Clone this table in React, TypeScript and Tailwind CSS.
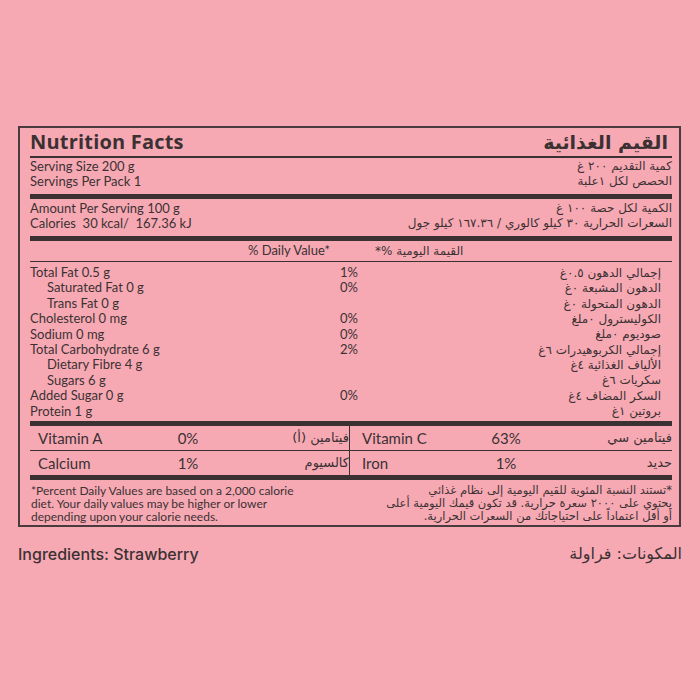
const en = "font-['Lato','Liberation_Sans',sans-serif]"
const ar = "font-['DejaVu_Sans','Noto_Sans',sans-serif]"

type Row = { en: string; pct: string; ar: string; sub?: boolean }

const rows: Row[] = [
  { en: "Total Fat 0.5 g", pct: "1%", ar: "إجمالي الدهون ٠.٥غ" },
  { en: "Saturated Fat 0 g", pct: "0%", ar: "الدهون المشبعة ٠غ", sub: true },
  { en: "Trans Fat 0 g", pct: "", ar: "الدهون المتحولة ٠غ", sub: true },
  { en: "Cholesterol 0 mg", pct: "0%", ar: "الكوليسترول ٠ملغ" },
  { en: "Sodium 0 mg", pct: "0%", ar: "صوديوم ٠ملغ" },
  { en: "Total Carbohydrate 6 g", pct: "2%", ar: "إجمالي الكربوهيدرات ٦غ" },
  { en: "Dietary Fibre 4 g", pct: "", ar: "الألياف الغذائية ٤غ", sub: true },
  { en: "Sugars 6 g", pct: "", ar: "سكريات ٦غ", sub: true },
  { en: "Added Sugar 0 g", pct: "0%", ar: "السكر المضاف ٤غ" },
  { en: "Protein 1 g", pct: "", ar: "بروتين ١غ" },
]

function ThickBar() {
  return <div className="h-[5px] bg-[#3b3133]" />
}

function ThinLine() {
  return <div className="h-[1.5px] bg-[#3b3133]" />
}

function VitCell({ en: label, pct, ar: arLabel, right }: { en: string; pct: string; ar: string; right?: boolean }) {
  return (
    <div
      className={
        right
          ? "grid grid-cols-[126px_60px_1fr] items-center h-full"
          : "grid grid-cols-[128px_60px_1fr] items-center h-full border-r-[1.5px] border-[#3b3133]"
      }
    >
      <span className={right ? "pl-[12px]" : "pl-[8px]"}>{label}</span>
      <span className="text-center">{pct}</span>
      <span dir="rtl" className={`${ar} text-[13px] ${right ? "pl-0" : "pl-[10px]"}`}>
        {arLabel}
      </span>
    </div>
  )
}

export default function App() {
  return (
    <div className={`w-[700px] h-[700px] bg-[#f7a9b3] pt-[126px] pl-[18px] text-[#3b3133] ${en}`}>
      <div className="w-[663px] border-2 border-[#4a3b3e] pl-[10px] pr-[7px]">
        {/* title */}
        <div className="flex items-center justify-between h-[28px]">
          <span className="font-['Open_Sans',sans-serif] text-[20px] font-bold tracking-[0.2px]">Nutrition Facts</span>
          <span dir="rtl" className={`${ar} text-[19px] font-bold pr-[4px]`}>
            القيم الغذائية
          </span>
        </div>
        <ThinLine />

        {/* serving */}
        <div className="flex justify-between text-[13px] leading-[15.5px] pt-[1px] pb-[4px]">
          <div>
            <div>Serving Size 200 g</div>
            <div>Servings Per Pack 1</div>
          </div>
          <div dir="rtl" className={`${ar} text-[12px]`}>
            <div>كمية التقديم ٢٠٠ غ</div>
            <div>الحصص لكل ١علبة</div>
          </div>
        </div>
        <ThickBar />

        <div className="flex justify-between text-[13px] leading-[15.5px] pt-[2px] pb-[4px]">
          <div>
            <div>Amount Per Serving 100 g</div>
            <div>Calories&nbsp;&nbsp;30 kcal/&nbsp;&nbsp;167.36 kJ</div>
          </div>
          <div dir="rtl" className={`${ar} text-[12px]`}>
            <div>الكمية لكل حصة ١٠٠ غ</div>
            <div>السعرات الحرارية ٣٠ كيلو كالوري / ١٦٧.٣٦ كيلو جول</div>
          </div>
        </div>
        <ThickBar />

        {/* daily value header */}
        <div className="grid grid-cols-[300px_38px_1fr] h-[20px] items-center text-[13px]">
          <span className="text-right">% Daily Value*</span>
          <span />
          <span dir="rtl" className={`${ar} text-[12px] text-left pl-[7px]`}>
            القيمة اليومية %*
          </span>
        </div>
        <ThinLine />

        {/* nutrients */}
        <div className="pt-[1px] pb-[4px]">
          {rows.map((r) => (
            <div key={r.en} className="grid grid-cols-[300px_38px_1fr] h-[15.4px] items-center text-[13px]">
              <span className={r.sub ? "pl-[17px]" : ""}>{r.en}</span>
              <span className="text-center">{r.pct}</span>
              <span dir="rtl" className={`${ar} text-[12px] pr-[11px] whitespace-nowrap`}>
                {r.ar}
              </span>
            </div>
          ))}
        </div>
        <ThickBar />

        {/* vitamins */}
        <div className="grid grid-cols-[320px_1fr] h-[24px] text-[15px]">
          <VitCell en="Vitamin A" pct="0%" ar="فيتامين (أ)" />
          <VitCell en="Vitamin C" pct="63%" ar="فيتامين سي" right />
        </div>
        <ThinLine />
        <div className="grid grid-cols-[320px_1fr] h-[23.5px] text-[15px]">
          <VitCell en="Calcium" pct="1%" ar="كالسيوم" />
          <VitCell en="Iron" pct="1%" ar="حديد" right />
        </div>
        <ThickBar />

        {/* footnote */}
        <div className="grid grid-cols-[320px_1fr] pt-[4px] pb-[2px] leading-[13px]">
          <div className="text-[12px] whitespace-nowrap pl-[1px]">
            *Percent Daily Values are based on a 2,000 calorie
            <br />
            diet. Your daily values may be higher or lower
            <br />
            depending upon your calorie needs.
          </div>
          <div dir="rtl" className={`${ar} text-[11.5px] whitespace-nowrap`}>
            *تستند النسبة المئوية للقيم اليومية إلى نظام غذائي
            <br />
            يحتوي على ٢٠٠٠ سعرة حرارية. قد تكون قيمك اليومية أعلى
            <br />
            أو أقل اعتماداً على احتياجاتك من السعرات الحرارية.
          </div>
        </div>
      </div>

      {/* ingredients */}
      <div className="w-[664px] flex justify-between items-center mt-[17px] h-[20px]">
        <span className="font-['Inter',sans-serif] font-medium text-[16px]">Ingredients: Strawberry</span>
        <span dir="rtl" className={`${ar} text-[16px]`}>
          المكونات: فراولة
        </span>
      </div>
    </div>
  )
}
